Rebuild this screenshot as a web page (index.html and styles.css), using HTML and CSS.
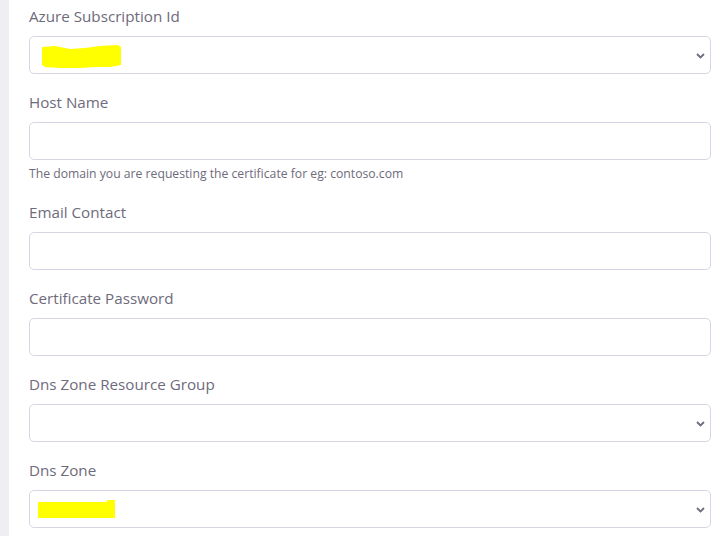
FILE: index.html
```html
<!DOCTYPE html>
<html>
<head>
<meta charset="utf-8">
<link rel="stylesheet" href="styles.css">
</head>
<body>
<div class="page">
  <div class="card">
    <div class="group">
      <div class="label">Azure Subscription Id</div>
      <div class="control select">
        <svg class="mark mark1" width="80" height="24" viewBox="0 0 80 24"><path d="M0 2 L13 1 L28 4 L43 3 L58 1 L76 0 L79 2 L79 20 L68 22 L53 22 L38 23 L18 23 L3 22 L0 20 Z" fill="#ffff00"/></svg>
        <svg class="chev" width="9" height="6" viewBox="0 0 9 6"><path d="M1 1 L4.5 4.5 L8 1" fill="none" stroke="#6e6b7b" stroke-width="1.8"/></svg>
      </div>
    </div>
    <div class="group">
      <div class="label">Host Name</div>
      <div class="control"></div>
      <div class="help">The domain you are requesting the certificate for eg: contoso.com</div>
    </div>
    <div class="group">
      <div class="label">Email Contact</div>
      <div class="control"></div>
    </div>
    <div class="group">
      <div class="label">Certificate Password</div>
      <div class="control"></div>
    </div>
    <div class="group">
      <div class="label">Dns Zone Resource Group</div>
      <div class="control select">
        <svg class="chev" width="9" height="6" viewBox="0 0 9 6"><path d="M1 1 L4.5 4.5 L8 1" fill="none" stroke="#6e6b7b" stroke-width="1.8"/></svg>
      </div>
    </div>
    <div class="group">
      <div class="label">Dns Zone</div>
      <div class="control select">
        <svg class="mark mark2" width="77" height="18" viewBox="0 0 77 18"><path d="M0 2 L69 2 L69 0 L77 0 L77 18 L0 18 Z" fill="#ffff00"/></svg>
        <svg class="chev" width="9" height="6" viewBox="0 0 9 6"><path d="M1 1 L4.5 4.5 L8 1" fill="none" stroke="#6e6b7b" stroke-width="1.8"/></svg>
      </div>
    </div>
  </div>
</div>
</body>
</html>
```

FILE: styles.css
```css
* { box-sizing: border-box; }
html, body { margin: 0; padding: 0; }
body {
  background: #ffffff;
  font-family: "Open Sans", "Noto Sans", sans-serif;
  color: #6e6b7b;
}
.page {
  background: #eeeef3;
  padding-left: 9px;
  height: 536px;
  overflow: hidden;
}
.card {
  background: #ffffff;
  height: 100%;
  padding: 6px 14px 0 20px;
}
.group { margin-bottom: 18px; }
.label {
  font-size: 15.2px;
  line-height: 20px;
  margin-bottom: 10px;
  color: #6e6b7b;
}
.control {
  height: 38px;
  border: 1px solid #d8d6e4;
  border-radius: 5px;
  background: #fff;
  display: flex;
  align-items: center;
  padding: 0 5px 0 8px;
}
.chev { margin-left: auto; margin-top: 1px; }
.mark1 { margin-left: 4px; margin-top: 4px; }
.mark2 { margin-left: 0; }
.help {
  font-size: 12.2px;
  line-height: 20px;
  margin-top: 4px;
  color: #6e6b7b;
}
```
